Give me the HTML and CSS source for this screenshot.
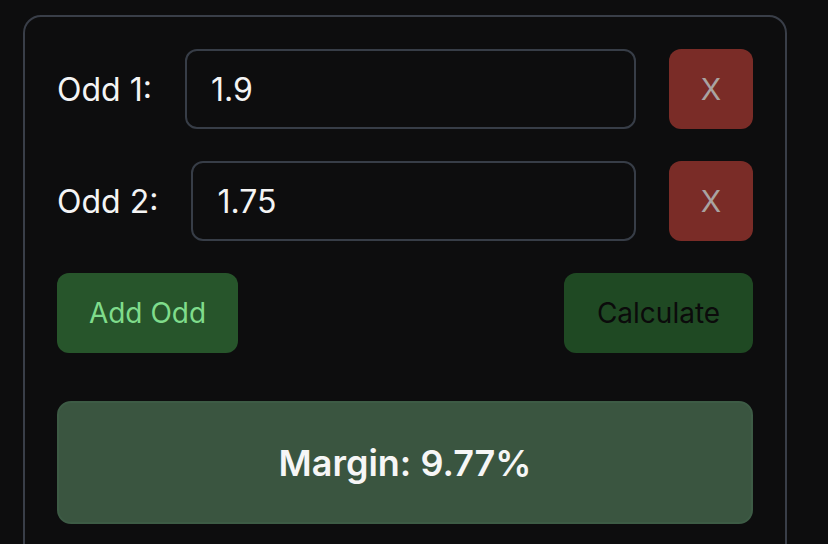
FILE: index.html
```html
<!DOCTYPE html>
<html lang="en">
<head>
<meta charset="utf-8">
<title>Margin Calculator</title>
<link rel="stylesheet" href="styles.css">
</head>
<body>
<div class="card">
  <div class="row">
    <label class="label" for="odd1">Odd 1:</label>
    <input class="odd-input" id="odd1" type="text" value="1.9">
    <button class="btn btn-remove">X</button>
  </div>
  <div class="row">
    <label class="label" for="odd2">Odd 2:</label>
    <input class="odd-input" id="odd2" type="text" value="1.75">
    <button class="btn btn-remove">X</button>
  </div>
  <div class="actions">
    <button class="btn btn-add">Add Odd</button>
    <button class="btn btn-calc">Calculate</button>
  </div>
  <div class="result">Margin: 9.77%</div>
</div>
</body>
</html>
```

FILE: styles.css
```css
* { box-sizing: border-box; }
html, body {
  margin: 0;
  padding: 0;
  background: #0d0d0e;
  font-family: Inter, "Noto Sans", sans-serif;
  color: #f2f2f2;
}
body {
  height: 544px;
  overflow: hidden;
}
.card {
  margin: 15px 0 0 23px;
  width: 764px;
  height: 560px;
  border: 2px solid #393e48;
  border-radius: 18px;
  padding: 32px 32px 0 32px;
  display: flex;
  flex-direction: column;
  gap: 32px;
}
.row {
  display: flex;
  align-items: center;
  gap: 33px;
  height: 80px;
}
.label {
  font-size: 32px;
  color: #f4f4f4;
  white-space: nowrap;
}
.odd-input {
  flex: 1;
  min-width: 0;
  height: 80px;
  background: transparent;
  border: 2px solid #373d47;
  border-radius: 12px;
  padding: 0 24px;
  font-family: inherit;
  font-size: 32px;
  color: #f4f4f4;
  outline: none;
}
.btn {
  height: 80px;
  border: none;
  border-radius: 12px;
  font-family: inherit;
  font-size: 28px;
  cursor: pointer;
}
.btn-remove {
  width: 84px;
  flex: none;
  background: #7a2c27;
  color: #a9a3a1;
  font-size: 30px;
}
.actions {
  display: flex;
  justify-content: space-between;
}
.btn-add {
  width: 181px;
  background: #27552b;
  color: #7fdc8b;
}
.btn-calc {
  width: 189px;
  background: #1f4923;
  color: #0b0b0b;
}
.result {
  margin-top: 16px;
  height: 123px;
  background: #3a5540;
  border: 2px solid #3d5b45;
  border-radius: 14px;
  display: flex;
  align-items: center;
  justify-content: center;
  font-size: 36px;
  font-weight: 600;
  color: #f6f6f6;
}
```
